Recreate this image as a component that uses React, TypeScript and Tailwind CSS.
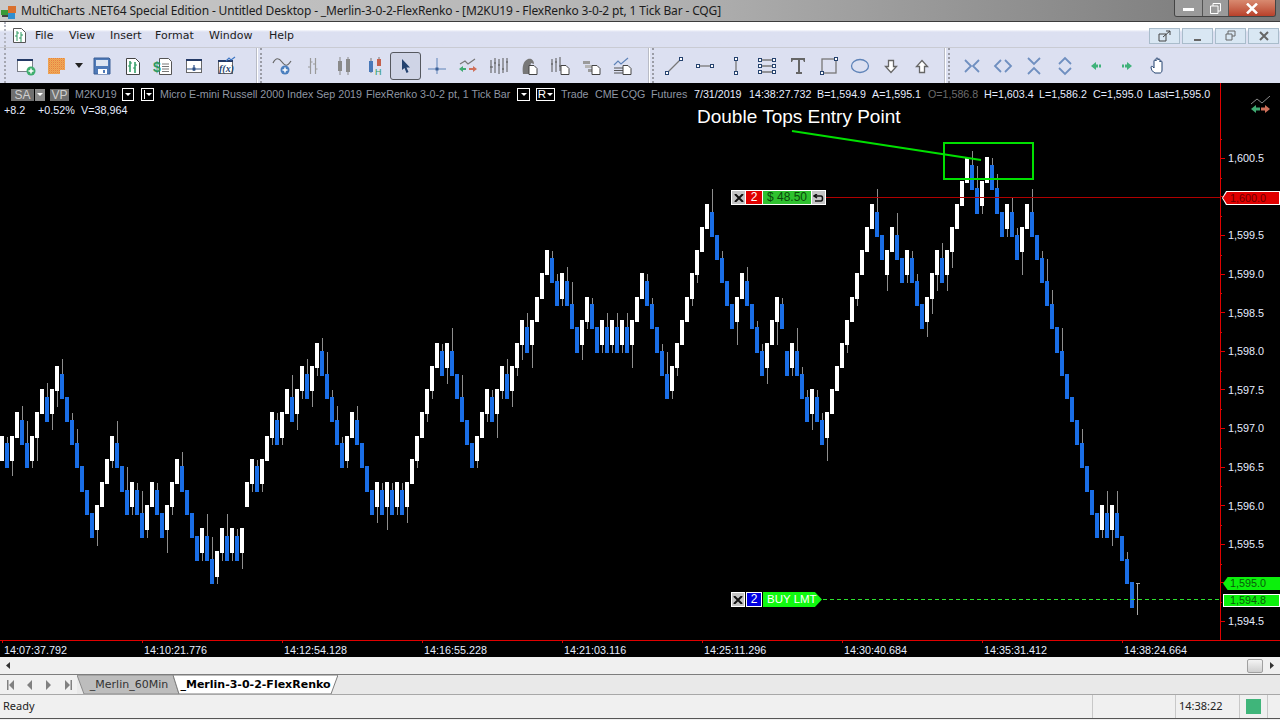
import type { ReactNode } from "react";

// [white?, bodyTop, bodyBottom, wickEnd] - index is the column, x = 5 * index
type Bar = [number, number, number, number?];

const bars: Bar[] = [
  [1,436,461],[0,443,468,437],[1,436,461,476],[1,412,438],[0,420,445,406],[0,443,468,421],[1,436,461,468],[1,412,438,461],
  [1,389,414],[0,397,422,383],[1,389,414,430],[1,366,391,407],[0,374,399,359],[0,397,422],[0,420,445,413],[0,443,468,429],
  [0,466,492],[0,490,515],[0,513,538],[1,505,530,546],[1,482,507],[1,459,484],[1,436,461,468],[0,443,468,421],
  [0,466,492],[0,490,515,467],[1,482,507,515],[0,490,515,483],[0,513,538,491],[1,505,530,538],[1,482,507],[0,490,515,483],
  [0,513,538],[1,505,530,553],[1,482,507,515],[1,459,484],[0,466,492,452],[0,490,515],[0,513,538],[0,536,561],
  [1,528,553,561],[0,536,561,514],[0,559,584,537],[1,551,577,584],[1,528,553,561],[0,536,561,514],[1,528,553,561],[0,536,561,529],
  [1,528,553,569],[1,482,507],[1,459,484,492],[0,466,492,460],[1,459,484,492],[1,436,461],[1,412,438,445],[0,420,445,413],
  [1,412,438,445],[1,389,414],[0,397,422,375],[1,389,414,430],[1,366,391,399],[0,374,399,359],[1,366,391,407],[1,343,368,376],
  [0,351,376,338],[0,374,399,352],[0,397,422,390],[0,420,445,406],[0,443,468,437],[1,436,461,468],[1,412,438],[0,420,445,406],
  [0,443,468],[0,466,492],[0,490,515],[1,482,507,523],[0,490,515,483],[1,482,507,530],[0,490,515,483],[1,482,507,515],
  [0,490,515,483],[1,482,507,523],[1,459,484],[1,436,461,468],[1,412,438],[1,389,414,422],[1,366,391,399],[1,343,368],
  [0,351,376,344],[1,343,368,384],[0,351,376,328],[0,374,399],[0,397,422,375],[0,420,445],[0,443,468],[1,436,461,468],
  [1,412,438],[1,389,414,422],[0,397,422,390],[1,389,414,438],[1,366,391,399],[0,374,399,359],[1,366,391,407],[1,343,368,376],
  [1,320,345,360],[0,327,353,313],[1,320,345,368],[1,297,322],[1,273,299],[1,250,275],[0,258,283,251],[0,281,306,274],
  [1,273,299,306],[0,281,306,267],[0,304,329,282],[0,327,353],[1,320,345,360],[1,297,322,329],[0,304,329,298],[0,327,353],
  [1,320,345,353],[0,327,353,313],[1,320,345,353],[0,327,353,313],[1,320,345,353],[0,327,353,313],[1,320,345,368],[1,297,322],
  [1,273,299],[0,281,306,274],[0,304,329,298],[0,327,353],[0,351,376,344],[0,374,399,352],[1,366,391,399],[1,343,368,376],
  [1,320,345],[1,297,322],[1,273,299,306],[1,250,275,283],[1,227,252],[1,204,229],[0,212,237,189],[0,235,260],
  [0,258,283,251],[0,281,306],[0,304,329],[1,297,322,345],[1,273,299],[0,281,306,267],[0,304,329],[0,327,353,321],
  [0,351,376,344],[1,343,368,384],[1,320,345],[1,297,322,345],[0,304,329,298],[0,351,376],[1,343,368,376],[0,351,376,328],
  [0,374,399,367],[0,397,422,390],[1,389,414,430],[0,397,422,390],[0,420,445,413],[1,412,438,461],[1,389,414],[1,366,391],
  [1,343,368],[1,320,345,353],[1,297,322],[1,273,299,306],[1,250,275],[1,227,252],[1,204,229],[0,212,237,189],
  [0,235,260],[1,250,275,291],[1,227,252],[0,235,260,213],[0,258,283],[1,250,275,283],[0,258,283,251],[0,281,306,274],
  [0,304,329],[1,297,322,337],[1,273,299,314],[1,250,275,291],[0,258,283,243],[1,250,275,291],[1,227,252,268],[1,204,229],
  [1,181,206],[1,158,183],[0,165,190,151],[0,188,214,166],[1,181,206,214],[1,157,183],[0,165,190,158],[0,188,214,174],
  [0,212,237],[1,204,229,237],[0,212,237,198],[0,235,260,228],[1,227,252,275],[1,204,229],[0,212,237,189],[0,235,260],
  [0,258,283,251],[0,281,306,259],[0,304,329,290],[0,327,353],[0,351,376,328],[0,374,399],[0,397,422],[0,420,445],
  [0,443,468,429],[0,466,492],[0,490,515],[0,513,538],[1,505,530,538],[0,513,538,491],[1,505,530,546],[0,513,538,491],
  [0,536,561],[0,559,584,552],[0,582,608],
];

const prices = ["1,600.5","1,600.0","1,599.5","1,599.0","1,598.5","1,598.0","1,597.5","1,597.0","1,596.5","1,596.0","1,595.5","1,595.0","1,594.5"];
const times = ["14:07:37.792","14:10:21.776","14:12:54.128","14:16:55.228","14:21:03.116","14:25:11.296","14:30:40.684","14:35:31.412","14:38:24.664"];
const menu = [["File","w-[34px]"],["View","w-[41px]"],["Insert","w-[45px]"],["Format","w-[54px]"],["Window","w-[60px]"],["Help","w-[40px]"]];

function Tool({ children, className = "w-[31px]" }: { children: ReactNode; className?: string }) {
  return <div className={`flex h-[28px] items-center justify-center ${className}`}>{children}</div>;
}

function Ico({ children, w = 20 }: { children: ReactNode; w?: number }) {
  return (
    <svg width={w} height="20" viewBox={`0 0 ${w} 20`} fill="none" shapeRendering="geometricPrecision">
      {children}
    </svg>
  );
}

function Sep({ className }: { className: string }) {
  return (
    <div className={`flex h-full items-stretch gap-[2px] ${className}`}>
      <div className="w-[2px] bg-[#b9bcc6] border-r border-white" />
      <div className="w-[2px] border-l-2 border-dotted border-[#9a9ca6]" />
    </div>
  );
}

function Doc({ x = 7, children }: { x?: number; children?: ReactNode }) {
  return (
    <g>
      <path d={`M${x} 9.500h5l3 3v6h-8z`} fill="#fff" stroke="#444" />
      {children}
    </g>
  );
}

function Toolbar() {
  return (
    <div className="flex h-[36px] items-center bg-[#dce0f1] border-t border-[#c9cbd3]">
      <div className="ml-[4px] h-full w-[2px] border-l-2 border-dotted border-[#a4a6b0]" />
      <div className="ml-[4px] flex items-center">
        <Tool>
          <Ico>
            <rect x="1.500" y="3.500" width="15" height="12" fill="#fff" stroke="#7a7f88" />
            <rect x="1" y="3" width="16" height="2" fill="#243a66" />
            <circle cx="15" cy="15" r="4.500" fill="#3fae6f" />
            <path d="M12.500 15h5M15 12.500v5" stroke="#fff" strokeWidth="1.500" />
          </Ico>
        </Tool>
        <Tool>
          <Ico>
            <defs>
              <pattern id="dots" width="2" height="2" patternUnits="userSpaceOnUse">
                <rect width="2" height="2" fill="#f2b04d" />
                <rect width="1" height="1" fill="#e57b4a" />
                <rect x="1" y="1" width="1" height="1" fill="#e8965a" />
              </pattern>
            </defs>
            <path d="M1 2h17v12h-5v4H1z" fill="url(#dots)" />
          </Ico>
        </Tool>
        <Tool className="w-[14px]">
          <svg width="8" height="5" viewBox="0 0 8 5"><path d="M0 0h8L4 5z" fill="#222" /></svg>
        </Tool>
        <Tool>
          <Ico>
            <path d="M2 2h15l1 1v15H2z" fill="#4f7ab8" stroke="#3a5f96" />
            <rect x="4" y="4" width="12" height="6" fill="#dfe6f2" />
            <rect x="6" y="13" width="9" height="5" fill="#fff" />
            <rect x="11" y="14" width="2" height="3" fill="#4f7ab8" />
          </Ico>
        </Tool>
        <Tool>
          <Ico>
            <path d="M3.500 2.500h9l4 4v12h-13z" fill="#fff" stroke="#444" />
            <path d="M7 5v11M12 6v11" stroke="#2d9a62" strokeWidth="1.500" />
            <path d="M5 10h2M7 7h2M10 12h2M12 9h2" stroke="#2d9a62" />
          </Ico>
        </Tool>
        <Tool className="w-[29px]">
          <Ico>
            <path d="M6.500 2.500h9l3 3v13h-12z" fill="#fff" stroke="#555" />
            <path d="M9 8h7M9 10.500h7M9 13h7M9 15.500h7" stroke="#777" />
            <text x="0" y="16" fontSize="14" fontFamily="Liberation Sans" fontWeight="700" fill="#2d9a62">$</text>
          </Ico>
        </Tool>
        <Tool className="w-[33px]">
          <Ico>
            <rect x="2.500" y="3.500" width="15" height="13" fill="#fff" stroke="#666" />
            <rect x="2" y="3" width="16" height="2" fill="#243a66" />
            <path d="M3 13h14M10 9v6" stroke="#2b4f86" strokeWidth="1.200" />
            <rect x="8.500" y="11.500" width="3" height="3" fill="#2b4f86" />
          </Ico>
        </Tool>
        <Tool>
          <Ico>
            <rect x="2.500" y="4.500" width="14" height="13" fill="#fff" stroke="#666" />
            <rect x="2" y="4" width="15" height="2" fill="#243a66" />
            <path d="M10 5l3-3 2 2 4-3" stroke="#3f77c4" strokeWidth="1.200" />
            <text x="3" y="16" fontSize="10" fontFamily="Liberation Serif" fontStyle="italic" fontWeight="700" fill="#26436f">f(x)</text>
          </Ico>
        </Tool>
      </div>
      <Sep className="ml-[15px]" />
      <div className="ml-[4px] flex items-center">
        <Tool>
          <Ico>
            <path d="M1 7c3-6 6-5 9-1s5 5 9-1" stroke="#666" strokeWidth="1.200" />
            <circle cx="13" cy="14" r="4.500" fill="#4b7fbf" />
            <path d="M10.500 14h5M13 11.500v5" stroke="#fff" strokeWidth="1.500" />
          </Ico>
        </Tool>
        <Tool>
          <Ico>
            <path d="M7.500 2v16M12.500 2v16" stroke="#9a9a9a" strokeWidth="1.200" />
            <path d="M5 11h2M7.500 6h2M10 8h2M12.500 13h2" stroke="#9a9a9a" />
          </Ico>
        </Tool>
        <Tool>
          <Ico>
            <path d="M6 1v18M14 1v18" stroke="#8a8a8a" />
            <rect x="4" y="5" width="4" height="10" fill="#8a8a8a" />
            <rect x="12" y="3" width="4" height="13" fill="#8a8a8a" />
          </Ico>
        </Tool>
        <Tool>
          <Ico>
            <path d="M6 2v15M14 1v9" stroke="#777" />
            <rect x="4" y="5" width="4" height="11" fill="#4878b8" />
            <rect x="12" y="3" width="4" height="7" fill="#c4604c" />
            <text x="10" y="19" fontSize="9" fontFamily="Liberation Sans" fill="#2d9a62">H</text>
          </Ico>
        </Tool>
        <div className="flex h-[28px] w-[31px] items-center justify-center rounded-[3px] border border-[#55585f] bg-[#cfd4e6]">
          <svg width="10" height="14" viewBox="0 0 10 14"><path d="M1 0v11l2.500-2 2 5 2-1-2-4.500H9z" fill="#23426f" /></svg>
        </div>
        <Tool>
          <Ico>
            <path d="M10 2v16M1 13h18" stroke="#5e83b8" />
            <rect x="8.500" y="11.500" width="3" height="3" fill="#3a5f96" />
          </Ico>
        </Tool>
        <Tool>
          <Ico>
            <path d="M2 8l5-3 3 3 7-5" stroke="#777" strokeWidth="1.200" />
            <path d="M1 13l4-3v2h3v2H5v2z" fill="#3faa72" />
            <path d="M19 13l-4-3v2h-4v2h4v2z" fill="#d0705a" />
          </Ico>
        </Tool>
        <Tool>
          <Ico>
            <path d="M2 4v13M6 2v15M10 3v15M14 2v15M18 2v14" stroke="#555" />
            <path d="M1 11h3M5 7h2M9 9h2M13 13h2M17 6h2" stroke="#555" />
          </Ico>
        </Tool>
        <Tool>
          <Ico>
            <path d="M3 18c-1-7 0-13 5-15 3-1 6 1 6 5l-3-1c-1 3-1 6 0 11z" fill="#777" />
            <Doc x={9} />
          </Ico>
        </Tool>
        <Tool>
          <Ico>
            <path d="M1 3v13M5 2v14M9 1v14" stroke="#555" />
            <path d="M0 8h2M4 6h2M8 10h2" stroke="#555" />
            <Doc x={10} />
          </Ico>
        </Tool>
        <Tool>
          <Ico>
            <rect x="1" y="5" width="7" height="3" fill="#9a9a9a" />
            <rect x="3" y="9" width="8" height="3" fill="#b5b5b5" />
            <rect x="6" y="13" width="6" height="3" fill="#9a9a9a" />
            <Doc x={10} />
          </Ico>
        </Tool>
        <Tool>
          <Ico>
            <path d="M1 9l4-4 3 3 7-6" stroke="#5e83b8" strokeWidth="1.200" />
            <path d="M1 12h9M1 14.500h9M1 17h9" stroke="#555" />
            <Doc x={10} />
          </Ico>
        </Tool>
      </div>
      <Sep className="ml-[10px]" />
      <div className="ml-[4px] flex items-center">
        <Tool>
          <Ico>
            <path d="M3 17L17 3" stroke="#777" strokeWidth="1.300" />
            <rect x="1.500" y="15.500" width="3" height="3" fill="#fff" stroke="#26436f" />
            <rect x="15.500" y="1.500" width="3" height="3" fill="#fff" stroke="#26436f" />
          </Ico>
        </Tool>
        <Tool>
          <Ico>
            <path d="M3 10h14" stroke="#777" strokeWidth="1.300" />
            <rect x="1.500" y="8.500" width="3" height="3" fill="#fff" stroke="#26436f" />
            <rect x="15.500" y="8.500" width="3" height="3" fill="#fff" stroke="#26436f" />
          </Ico>
        </Tool>
        <Tool>
          <Ico>
            <path d="M10 3v14" stroke="#777" strokeWidth="1.300" />
            <rect x="8.500" y="1.500" width="3" height="3" fill="#fff" stroke="#26436f" />
            <rect x="8.500" y="15.500" width="3" height="3" fill="#fff" stroke="#26436f" />
          </Ico>
        </Tool>
        <Tool>
          <Ico>
            <path d="M3 4h14M3 10h14M3 16h14" stroke="#777" strokeWidth="1.300" />
            {[4, 10, 16].map((y) => (
              <g key={y}>
                <rect x="1.500" y={y - 1.5} width="3" height="3" fill="#fff" stroke="#26436f" />
                <rect x="15.500" y={y - 1.5} width="3" height="3" fill="#fff" stroke="#26436f" />
              </g>
            ))}
          </Ico>
        </Tool>
        <Tool>
          <Ico>
            <path d="M3 2h14v4h-1l-1-2h-3v12h2v2H8v-2h2V4H5L4 6H3z" fill="#666" />
          </Ico>
        </Tool>
        <Tool>
          <Ico>
            <rect x="3" y="3" width="14" height="14" stroke="#777" strokeWidth="1.300" />
            <rect x="1.500" y="15.500" width="3" height="3" fill="#fff" stroke="#26436f" />
            <rect x="15.500" y="1.500" width="3" height="3" fill="#fff" stroke="#26436f" />
          </Ico>
        </Tool>
        <Tool>
          <Ico>
            <ellipse cx="10" cy="10" rx="8.500" ry="6.500" stroke="#5e83b8" strokeWidth="1.300" />
          </Ico>
        </Tool>
        <Tool>
          <Ico>
            <path d="M7.500 4.500h5v6h3l-5.500 6-5.500-6h3z" fill="#fff" stroke="#666" strokeWidth="1.300" />
          </Ico>
        </Tool>
        <Tool>
          <Ico>
            <path d="M7.500 16.500h5v-6h3l-5.500-6-5.500 6h3z" fill="#fff" stroke="#666" strokeWidth="1.300" />
          </Ico>
        </Tool>
      </div>
      <Sep className="ml-[7px]" />
      <div className="ml-[6px] flex items-center">
        <Tool>
          <Ico>
            <path d="M3 4l6 6-6 6M17 4l-6 6 6 6" stroke="#6f8fc0" strokeWidth="1.800" />
          </Ico>
        </Tool>
        <Tool>
          <Ico>
            <path d="M8 4l-6 6 6 6M12 4l6 6-6 6" stroke="#6f8fc0" strokeWidth="1.800" />
          </Ico>
        </Tool>
        <Tool>
          <Ico>
            <path d="M4 2l6 6 6-6M4 18l6-6 6 6" stroke="#6f8fc0" strokeWidth="1.800" />
          </Ico>
        </Tool>
        <Tool>
          <Ico>
            <path d="M4 8l6-6 6 6M4 12l6 6 6-6" stroke="#6f8fc0" strokeWidth="1.800" />
          </Ico>
        </Tool>
        <Tool>
          <Ico>
            <path d="M5 10l5-4v2.500h2v3h-2V14zM13 8.500h2v3h-2z" fill="#3fb27a" />
          </Ico>
        </Tool>
        <Tool>
          <Ico>
            <path d="M15 10l-5-4v2.500H8v3h2V14zM7 8.500H5v3h2z" fill="#3fb27a" />
          </Ico>
        </Tool>
        <Tool>
          <Ico>
            <path d="M7 17c-2-1-4-3-4-6 0-1 2-1 3 1V5c0-1.500 2-1.500 2 0V3c0-1.500 2-1.500 2 0v1c0-1.500 2-1.500 2 0v2c0-1.500 2-1.500 2 0v8c0 2-1 3-2 3z" fill="#fff" stroke="#23426f" />
          </Ico>
        </Tool>
      </div>
    </div>
  );
}

function Chart() {
  return (
    <svg width="1220" height="557" viewBox="0 83 1220 557" shapeRendering="crispEdges" className="block">
      {bars.map(([, top, bottom, wick], i) =>
        wick ? (
          <rect
            key={`w${i}`}
            x={5 * i + 2}
            y={Math.min(top, wick)}
            width="1"
            height={Math.abs(wick > top ? wick - top : bottom - wick)}
            fill="#8e8e8e"
          />
        ) : null
      )}
      {bars.map(([white, top, bottom], i) => (
        <rect key={i} x={5 * i} y={top} width="4" height={bottom - top} fill={white ? "#ffffff" : "#1a6ee6"} />
      ))}
      {/* last forming bar */}
      <path d="M1137 583v32M1136 583h4" stroke="#a8a8a8" />
      <rect x="826" y="197" width="394" height="1" fill="#b00000" />
      <path d="M823 599.500h397" stroke="#2ee02e" strokeDasharray="4 3" />
      <rect x="944" y="143" width="89" height="36" fill="none" stroke="#00e000" strokeWidth="2.500" />
      <path d="M792 131L981 160" stroke="#00e000" strokeWidth="2.200" shapeRendering="geometricPrecision" />
    </svg>
  );
}

function ChartHeader() {
  return (
    <>
      <div className="absolute left-0 top-[5px] flex h-[13px] items-center whitespace-nowrap text-[10.7px] text-[#8f96a3]">
        <div className="ml-[11px] flex h-[12px] w-[23px] items-center justify-center bg-[#6f6f6f] text-[12px] text-[#cfcfcf]">SA</div>
        <div className="ml-px flex h-[12px] w-[10px] items-center justify-center bg-[#8a8a8a]">
          <svg width="6" height="3" viewBox="0 0 6 3"><path d="M0 0h6L3 3z" fill="#fff" /></svg>
        </div>
        <div className="ml-[5px] flex h-[12px] w-[19px] items-center justify-center bg-[#6f6f6f] text-[12px] text-[#cfcfcf]">VP</div>
        <div className="ml-[6px] w-[47px]">M2KU19</div>
        <div className="flex h-[13px] w-[12px] items-center justify-center border border-white">
          <svg width="6" height="3" viewBox="0 0 6 3"><path d="M0 0h6L3 3z" fill="#fff" /></svg>
        </div>
        <div className="ml-[7px] flex h-[13px] w-[13px] items-center justify-center gap-px border border-white">
          <div className="h-[9px] w-px bg-white" />
          <svg width="6" height="3" viewBox="0 0 6 3"><path d="M0 0h6L3 3z" fill="#fff" /></svg>
        </div>
        <div className="ml-[6px] w-[206px]">Micro E-mini Russell 2000 Index Sep 2019</div>
        <div className="w-[151px]">FlexRenko 3-0-2 pt, 1 Tick Bar</div>
        <div className="flex h-[13px] w-[13px] items-center justify-center border border-white">
          <svg width="6" height="3" viewBox="0 0 6 3"><path d="M0 0h6L3 3z" fill="#fff" /></svg>
        </div>
        <div className="ml-[6px] flex h-[13px] w-[19px] items-center justify-center gap-px border border-white text-[11.5px] text-white">
          R<svg width="6" height="3" viewBox="0 0 6 3"><path d="M0 0h6L3 3z" fill="#fff" /></svg>
        </div>
        <div className="ml-[6px] w-[34px]">Trade</div>
        <div className="w-[26px]">CME</div>
        <div className="w-[30px]">CQG</div>
        <div className="w-[43px]">Futures</div>
        <div className="w-[55px] text-[#e6ecff]">7/31/2019</div>
        <div className="w-[68px] text-[#e6ecff]">14:38:27.732</div>
        <div className="w-[55px] text-[#e6ecff]">B=1,594.9</div>
        <div className="w-[56px] text-[#e6ecff]">A=1,595.1</div>
        <div className="w-[56px] text-[#6b6b6b]">O=1,586.8</div>
        <div className="w-[55px] text-[#e6ecff]">H=1,603.4</div>
        <div className="w-[54px] text-[#e6ecff]">L=1,586.2</div>
        <div className="w-[55px] text-[#e6ecff]">C=1,595.0</div>
        <div className="text-[#e6ecff]">Last=1,595.0</div>
      </div>
      <div className="absolute left-[4px] top-[21px] flex h-[13px] items-center whitespace-nowrap text-[10.8px] text-[#e6ecff]">
        <div className="w-[34px]">+8.2</div>
        <div className="w-[43px]">+0.52%</div>
        <div>V=38,964</div>
      </div>
    </>
  );
}

function TradePill() {
  return (
    <div className="absolute left-[731px] top-[107px] flex h-[15px] items-stretch gap-px border border-white bg-white text-[12px] leading-[13px]">
      <div className="flex w-[13px] items-center justify-center bg-[#c4c4c4]">
        <svg width="10" height="8" viewBox="0 0 10 8"><path d="M1 0l8 8M9 0L1 8" stroke="#111" strokeWidth="2" /></svg>
      </div>
      <div className="flex w-[16px] items-center justify-center bg-[#e00000] text-white">2</div>
      <div className="flex w-[48px] items-center justify-center bg-[#2fc22f] text-[#0b4a0b]">$ 48.50</div>
      <div className="flex w-[13px] items-center justify-center bg-[#c4c4c4]">
        <svg width="11" height="8" viewBox="0 0 11 8" fill="none"><path d="M4 0L1 2l3 2M1 2h7c2 0 2 5 0 5H2" stroke="#111" strokeWidth="1.500" /></svg>
      </div>
    </div>
  );
}

function OrderPill() {
  return (
    <div className="absolute left-[731px] top-[509px] flex h-[15px] items-stretch gap-px text-[12px] leading-[13px]">
      <div className="flex w-[14px] items-center justify-center border border-white bg-[#c4c4c4]">
        <svg width="10" height="8" viewBox="0 0 10 8"><path d="M1 0l8 8M9 0L1 8" stroke="#111" strokeWidth="2" /></svg>
      </div>
      <div className="flex w-[16px] items-center justify-center border border-white bg-[#0000e0] text-white">2</div>
      <div className="flex w-[59px] items-center bg-[#10f810] pl-[4px] text-[11.5px] text-white [clip-path:polygon(0_0,88%_0,100%_50%,88%_100%,0_100%)]">
        BUY LMT
      </div>
    </div>
  );
}

function PriceAxis() {
  return (
    <div className="relative w-[60px] border-l border-[#e00000] pt-[56px] text-[10.8px] text-[#e6ecff]">
      {prices.map((p) => (
        <div key={p} className="relative flex h-[38.6px] items-center">
          <span className="absolute left-0 top-0 h-px w-[1px] bg-[#e00000]" />
          <span className="h-px w-[4px] bg-[#e00000]" />
          <span className="ml-[3px]">{p}</span>
        </div>
      ))}
      <div className="absolute left-[1px] top-[108px] h-[14px] w-[58px] bg-white [clip-path:polygon(7%_0,100%_0,100%_100%,7%_100%,0_50%)]">
        <div className="ml-[1px] mt-[1px] flex h-[12px] w-[56px] items-center bg-[#e00000] pl-[7px] text-[#6d0000] [clip-path:polygon(7%_0,100%_0,100%_100%,7%_100%,0_50%)]">
          1,600.0
        </div>
      </div>
      <div className="absolute left-[2px] top-[494px] flex h-[13px] w-[58px] items-center bg-[#0cf00c] pl-[7px] text-[#0a5a0a] [clip-path:polygon(8%_0,100%_0,100%_100%,8%_100%,0_50%)]">
        1,595.0
      </div>
      <div className="absolute left-[2px] top-[511px] flex h-[13px] w-[57px] items-center border border-white bg-[#0cf00c] pl-[6px] text-[#0a5a0a]">
        1,594.8
      </div>
      <svg className="absolute left-[29px] top-[13px]" width="21" height="18" viewBox="0 0 21 18" fill="none">
        <path d="M1 8l6-5 5 4 8-7" stroke="#8a8a8a" />
        <path d="M1 13l5-4v2.500h4v3H6V17z" fill="#3faa72" />
        <path d="M20 13l-5-4v2.500h-4v3h4V17z" fill="#d0705a" />
      </svg>
    </div>
  );
}

export default function App() {
  return (
    <div className="flex h-[720px] w-[1280px] flex-col overflow-hidden bg-[#f0f0f0] font-['Liberation_Sans',sans-serif]">
      {/* window title */}
      <div className="relative flex h-[21px] items-center bg-gradient-to-r from-[#c9c9c9] via-[#b4b4b4] to-[#787878] font-['Noto_Sans',sans-serif] text-[12px] tracking-[-0.15px] text-[#1c1c1c]">
        <svg className="ml-[1px]" width="16" height="16" viewBox="0 0 16 16">
          <rect x="0" y="7" width="8" height="5" fill="#3a9a3a" />
          <rect x="7" y="3" width="8" height="7" fill="#d9702e" />
          <rect x="7" y="10" width="7" height="6" fill="#2f8fd0" />
          <rect x="1" y="12" width="6" height="2" fill="#444" />
        </svg>
        <span className="ml-[4px] whitespace-nowrap">
          MultiCharts .NET64 Special Edition - Untitled Desktop - _Merlin-3-0-2-FlexRenko - [M2KU19 - FlexRenko 3-0-2 pt, 1 Tick Bar - CQG]
        </span>
        <div className="absolute right-[4px] top-0 flex h-[17px] overflow-hidden rounded-b-[3px] border border-t-0 border-[#444]">
          <div className="flex w-[28px] items-center justify-center border-r border-[#555] bg-[#9a9a9a]">
            <div className="mt-[3px] h-[3px] w-[11px] bg-white" />
          </div>
          <div className="flex w-[26px] items-center justify-center border-r border-[#555] bg-[#9a9a9a]">
            <svg width="11" height="11" viewBox="0 0 11 11" fill="none"><path d="M3 3V.5h7.500V8H8M.5 3h7.500v7.500H.5z" stroke="#fff" /></svg>
          </div>
          <div className="flex w-[46px] items-center justify-center bg-gradient-to-b from-[#d88a70] to-[#b8402a]">
            <svg width="12" height="11" viewBox="0 0 12 11"><path d="M1 .5l10 10M11 .5l-10 10" stroke="#fff" strokeWidth="2.500" /></svg>
          </div>
        </div>
      </div>
      <div className="h-px bg-[#3c3c3c]" />

      {/* menu bar */}
      <div className="relative flex h-[25px] items-center bg-gradient-to-b from-white from-30% to-[#dce0f1] to-40% font-['DejaVu_Sans',sans-serif] text-[11px] text-[#1c1c1c]">
        <div className="ml-[4px] h-full w-[2px] border-l-2 border-dotted border-[#b4b6c0]" />
        <svg className="ml-[7px] mt-[1px]" width="13" height="15" viewBox="0 0 13 15" fill="none">
          <path d="M.5.5h8l4 4v10H.5z" fill="#fff" stroke="#555" />
          <path d="M4 3v10M8 4v10M2 8h2M4 5h2M6 10h2M8 7h2" stroke="#2d9a62" />
        </svg>
        <div className="ml-[9px] flex pt-[3px]">
          {menu.map(([label, w]) => (
            <div key={label} className={w}>{label}</div>
          ))}
        </div>
        <div className="absolute right-[1px] top-[6px] flex gap-[2px]">
          {["pop", "min", "max", "close"].map((b) => (
            <div key={b} className="flex h-[16px] w-[31px] items-center justify-center border border-[#a9bccb] bg-[#d9e7f3]">
              <svg width="14" height="12" viewBox="0 0 14 12" fill="none">
                {b === "pop" && <path d="M1 4h7v7H1zM5 7l7-6M8 1h4v4" stroke="#444" />}
                {b === "min" && <path d="M3 10h7" stroke="#666" strokeWidth="2" />}
                {b === "max" && <path d="M4 4V1h7v5H8M2 4h6v6H2z" stroke="#666" />}
                {b === "close" && <path d="M3 2l8 8M11 2l-8 8" stroke="#666" strokeWidth="2" />}
              </svg>
            </div>
          ))}
        </div>
      </div>

      <Toolbar />

      {/* chart */}
      <div className="flex h-[557px] bg-black">
        <div className="relative w-[1220px]">
          <Chart />
          <ChartHeader />
          <div className="absolute left-[697px] top-[23px] text-[19px] leading-[22px] whitespace-nowrap text-white">Double Tops Entry Point</div>
          <TradePill />
          <OrderPill />
        </div>
        <PriceAxis />
      </div>
      <div className="h-px bg-[#e00000]" />
      <div className="flex h-[16px] bg-black pl-[2px] text-[10.8px] text-[#e6ecff]">
        {times.map((t) => (
          <div key={t} className="relative w-[140px] pl-[2px] leading-[18px]">
            <span className="absolute left-0 top-0 h-[2px] w-px bg-[#e00000]" />
            {t}
          </div>
        ))}
      </div>

      {/* scroller */}
      <div className="flex h-[17px] items-center justify-between bg-[#f0f0f0] pl-[6px] pr-[6px]">
        <svg width="4" height="7" viewBox="0 0 4 7"><path d="M4 0v7L0 3.500z" fill="#333" /></svg>
        <div className="flex items-center gap-[7px]">
          <div className="h-[14px] w-[16px] rounded-[2px] border border-[#a0a0a0] bg-gradient-to-b from-[#f4f4f4] to-[#cfcfcf]" />
          <svg width="4" height="7" viewBox="0 0 4 7"><path d="M0 0v7l4-3.500z" fill="#333" /></svg>
        </div>
      </div>

      {/* sheet tabs */}
      <div className="flex h-[20px] border-t border-[#7d7d7d] bg-[#e9e9e9] text-[12px]">
        <div className="flex w-[77px] items-center bg-[#f0f0f0] pl-[7px] text-[#777]">
          <svg width="65" height="10" viewBox="0 0 65 10">
            <path d="M0 0h1.500v10H0zM7 0v10L2 5zM25 0v10l-5-5zM39 0v10l5-5zM58 0v10l5-5zM63.500 0H65v10h-1.500z" fill="#808080" />
          </svg>
        </div>
        <div className="relative flex w-[102px] items-center justify-center pl-[2px] pt-px text-[#333] font-['DejaVu_Sans',sans-serif] text-[11px]">
          <svg className="absolute inset-0" width="102" height="19" viewBox="0 0 102 19">
            <path d="M0 0h96l6 19H7z" fill="#bdbdbd" stroke="#8a8a8a" />
          </svg>
          <span className="relative">_Merlin_60Min</span>
        </div>
        <div className="relative -ml-[6px] flex w-[165px] items-center justify-center pt-px text-black font-['DejaVu_Sans',sans-serif] text-[11px] font-bold">
          <svg className="absolute inset-0" width="165" height="19" viewBox="0 0 165 19">
            <path d="M0 0h165l-7 19H6z" fill="#fff" stroke="#7d7d7d" />
          </svg>
          <span className="relative">_Merlin-3-0-2-FlexRenko</span>
        </div>
      </div>

      {/* status bar */}
      <div className="flex h-[24px] items-center border-t border-[#a8a8a8] bg-[#f0f0f0] font-['Noto_Sans',sans-serif] text-[11px] text-[#222]">
        <div className="w-[1092px] pl-[3px]">Ready</div>
        <div className="h-full w-[83px] border-l border-[#c8c8c8]" />
        <div className="flex h-full w-[64px] items-center border-l border-[#c8c8c8] pl-[3px]">14:38:22</div>
        <div className="flex h-full w-[28px] items-center justify-center border-l border-[#c8c8c8]">
          <div className="h-[15px] w-[15px] bg-[#3fb57a]" />
        </div>
        <div className="h-full flex-1 border-l border-[#c8c8c8]" />
      </div>
      <div className="h-[1px] bg-[#555]" />
    </div>
  );
}
